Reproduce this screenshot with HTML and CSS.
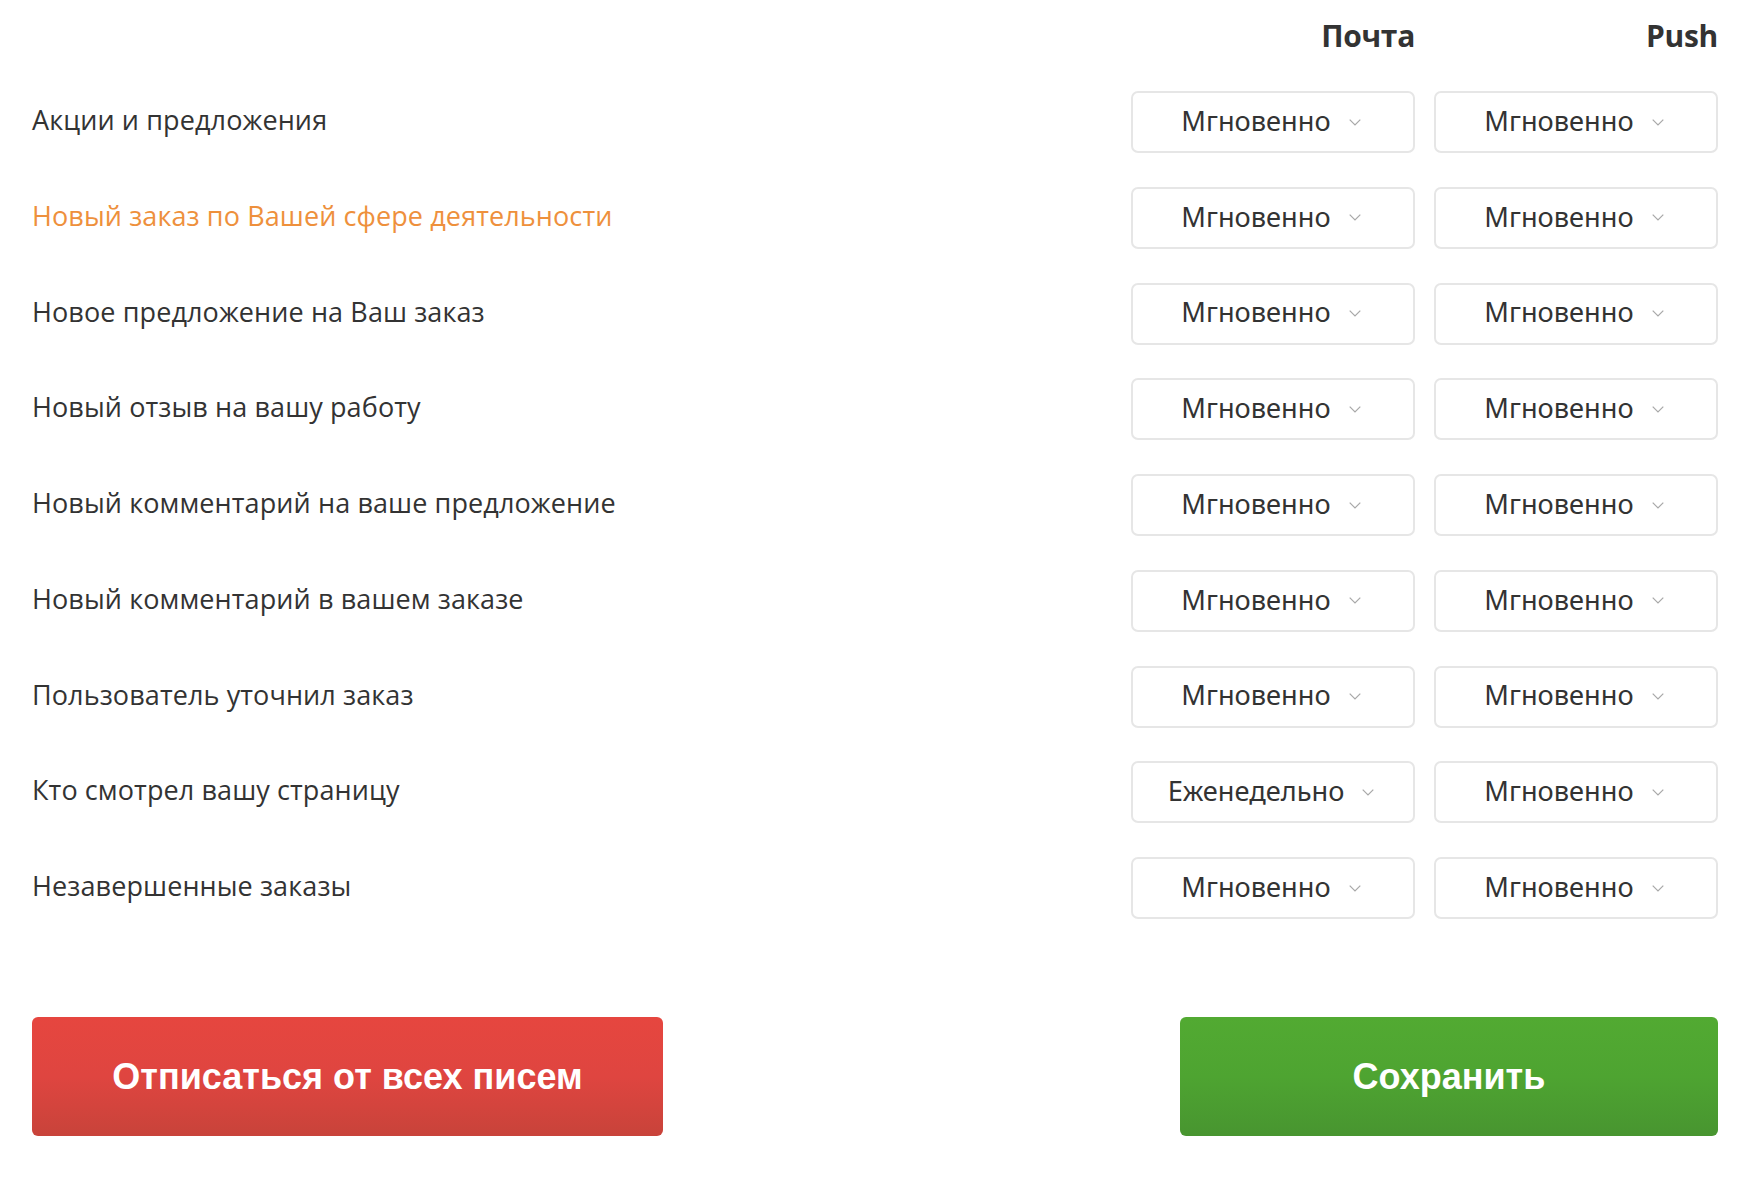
FILE: index.html
```html
<!DOCTYPE html>
<html lang="ru">
<head>
<meta charset="utf-8">
<title>Настройки уведомлений</title>
<link rel="stylesheet" href="styles.css">
</head>
<body>
<div class="page">
  <div class="grid head">
    <div></div>
    <div class="col-title">Почта</div>
    <div class="col-title">Push</div>
  </div>
  <div class="grid rows">
    <div class="label">Акции и предложения</div>
    <div class="select"><span>Мгновенно</span><svg class="chev" viewBox="0 0 12 7"><polyline points="0.7,0.7 6,6 11.3,0.7"/></svg></div>
    <div class="select"><span>Мгновенно</span><svg class="chev" viewBox="0 0 12 7"><polyline points="0.7,0.7 6,6 11.3,0.7"/></svg></div>

    <div class="label accent">Новый заказ по Вашей сфере деятельности</div>
    <div class="select"><span>Мгновенно</span><svg class="chev" viewBox="0 0 12 7"><polyline points="0.7,0.7 6,6 11.3,0.7"/></svg></div>
    <div class="select"><span>Мгновенно</span><svg class="chev" viewBox="0 0 12 7"><polyline points="0.7,0.7 6,6 11.3,0.7"/></svg></div>

    <div class="label">Новое предложение на Ваш заказ</div>
    <div class="select"><span>Мгновенно</span><svg class="chev" viewBox="0 0 12 7"><polyline points="0.7,0.7 6,6 11.3,0.7"/></svg></div>
    <div class="select"><span>Мгновенно</span><svg class="chev" viewBox="0 0 12 7"><polyline points="0.7,0.7 6,6 11.3,0.7"/></svg></div>

    <div class="label">Новый отзыв на вашу работу</div>
    <div class="select"><span>Мгновенно</span><svg class="chev" viewBox="0 0 12 7"><polyline points="0.7,0.7 6,6 11.3,0.7"/></svg></div>
    <div class="select"><span>Мгновенно</span><svg class="chev" viewBox="0 0 12 7"><polyline points="0.7,0.7 6,6 11.3,0.7"/></svg></div>

    <div class="label">Новый комментарий на ваше предложение</div>
    <div class="select"><span>Мгновенно</span><svg class="chev" viewBox="0 0 12 7"><polyline points="0.7,0.7 6,6 11.3,0.7"/></svg></div>
    <div class="select"><span>Мгновенно</span><svg class="chev" viewBox="0 0 12 7"><polyline points="0.7,0.7 6,6 11.3,0.7"/></svg></div>

    <div class="label">Новый комментарий в вашем заказе</div>
    <div class="select"><span>Мгновенно</span><svg class="chev" viewBox="0 0 12 7"><polyline points="0.7,0.7 6,6 11.3,0.7"/></svg></div>
    <div class="select"><span>Мгновенно</span><svg class="chev" viewBox="0 0 12 7"><polyline points="0.7,0.7 6,6 11.3,0.7"/></svg></div>

    <div class="label">Пользователь уточнил заказ</div>
    <div class="select"><span>Мгновенно</span><svg class="chev" viewBox="0 0 12 7"><polyline points="0.7,0.7 6,6 11.3,0.7"/></svg></div>
    <div class="select"><span>Мгновенно</span><svg class="chev" viewBox="0 0 12 7"><polyline points="0.7,0.7 6,6 11.3,0.7"/></svg></div>

    <div class="label">Кто смотрел вашу страницу</div>
    <div class="select"><span>Еженедельно</span><svg class="chev" viewBox="0 0 12 7"><polyline points="0.7,0.7 6,6 11.3,0.7"/></svg></div>
    <div class="select"><span>Мгновенно</span><svg class="chev" viewBox="0 0 12 7"><polyline points="0.7,0.7 6,6 11.3,0.7"/></svg></div>

    <div class="label">Незавершенные заказы</div>
    <div class="select"><span>Мгновенно</span><svg class="chev" viewBox="0 0 12 7"><polyline points="0.7,0.7 6,6 11.3,0.7"/></svg></div>
    <div class="select"><span>Мгновенно</span><svg class="chev" viewBox="0 0 12 7"><polyline points="0.7,0.7 6,6 11.3,0.7"/></svg></div>
  </div>
  <div class="actions">
    <button class="btn btn-red">Отписаться от всех писем</button>
    <button class="btn btn-green">Сохранить</button>
  </div>
</div>
</body>
</html>
```
FILE: styles.css
```css
html, body {
  margin: 0;
  padding: 0;
  background: #ffffff;
}

.page {
  padding: 18px 42px 0 32px;
  font-family: "Noto Sans", "Open Sans", sans-serif;
  color: #333333;
}

.grid {
  display: grid;
  grid-template-columns: 1fr 284px 284px;
  column-gap: 19px;
}

.head {
  margin-bottom: 37px;
}

.col-title {
  font-family: "Open Sans", "Noto Sans", sans-serif;
  font-weight: 700;
  font-size: 30px;
  line-height: 36px;
  text-align: right;
  color: #333333;
  letter-spacing: -0.3px;
}

.rows {
  row-gap: 33.75px;
  align-items: center;
}

.label {
  font-family: "Open Sans", "Noto Sans", sans-serif;
  font-size: 27px;
  line-height: 34px;
  color: #333333;
  letter-spacing: 0.1px;
  padding-bottom: 4px;
}

.label.accent {
  color: #ee903c;
}

.select {
  box-sizing: border-box;
  height: 62px;
  border: 2px solid #e6e6e6;
  border-radius: 7px;
  display: flex;
  align-items: center;
  justify-content: center;
  gap: 18px;
  padding-right: 4px;
  padding-bottom: 3px;
  font-size: 27.2px;
  color: #333333;
  background: #ffffff;
}

.select span {
  line-height: 1;
}

.chev {
  width: 12px;
  height: 7px;
  fill: none;
  stroke: #a8a8a8;
  stroke-width: 1.2;
  margin-top: 3px;
}

.actions {
  display: flex;
  justify-content: space-between;
  margin-top: 98px;
}

.btn {
  height: 119px;
  border: none;
  border-radius: 6px;
  color: #ffffff;
  font-family: "Liberation Sans", Arial, sans-serif;
  font-weight: 700;
  font-size: 36px;
  padding: 0;
  cursor: pointer;
}

.btn-red {
  width: 631px;
  background: linear-gradient(to bottom, #e6463f 0%, #df4540 50%, #c8433a 100%);
}

.btn-green {
  width: 538px;
  background: linear-gradient(to bottom, #52aa32 0%, #4ea431 50%, #489530 100%);
}
```
